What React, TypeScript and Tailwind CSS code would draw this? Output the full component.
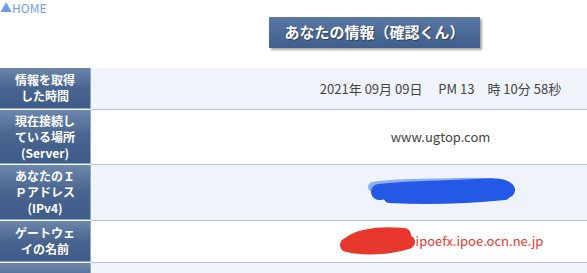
import React from 'react';

type Row = {
  label: string[];
  height: string;
  shaded: boolean;
  value: React.ReactNode;
};

const BlueScribble: React.FC = () => (
  <svg width="152" height="32" viewBox="0 0 152 32" className="inline-block align-middle">
    <path d="M8 10 C 30 6, 60 7, 90 6 S 135 7, 142 9" stroke="#6f9af0" strokeWidth="10" strokeLinecap="round" fill="none" opacity="0.75" />
    <path d="M14 15 C 45 11, 80 12, 110 10 S 138 11, 142 13" stroke="#2459e8" strokeWidth="16" strokeLinecap="round" fill="none" />
    <path d="M24 21 C 60 23, 100 22, 140 18" stroke="#2459e8" strokeWidth="10" strokeLinecap="round" fill="none" />
  </svg>
);

const RedScribble: React.FC = () => (
  <svg width="78" height="30" viewBox="0 0 78 30" className="inline-block align-middle">
    <path d="M12 16 C 24 8, 42 6, 66 8" stroke="#e8382e" strokeWidth="14" strokeLinecap="round" fill="none" />
    <path d="M9 18 C 26 22, 50 21, 70 15" stroke="#e8382e" strokeWidth="14" strokeLinecap="round" fill="none" />
  </svg>
);

const rows: Row[] = [
  {
    label: ['情報を取得', 'した時間'],
    height: 'h-[41px]',
    shaded: true,
    value: <span>2021年 09月 09日　 PM 13　時 10分 58秒</span>,
  },
  {
    label: ['現在接続し', 'ている場所', '(Server)'],
    height: 'h-[54px]',
    shaded: false,
    value: <span>www.ugtop.com</span>,
  },
  {
    label: ['あなたのＩ', 'Ｐアドレス', '(IPv4)'],
    height: 'h-[55px]',
    shaded: true,
    value: <BlueScribble />,
  },
  {
    label: ['ゲートウェ', 'イの名前'],
    height: 'h-[41px]',
    shaded: false,
    value: (
      <span className="text-[#e8392c]">
        <RedScribble />
        ipoefx.ipoe.ocn.ne.jp
      </span>
    ),
  },
  {
    label: [],
    height: 'h-[41px]',
    shaded: true,
    value: null,
  },
];

const App: React.FC = () => {
  return (
    <div className="h-screen w-full overflow-hidden bg-white" style={{ fontFamily: '"Noto Sans CJK JP", "Noto Sans", sans-serif' }}>
      <div className="w-[790px]">
        <a href="#" className="block text-[12px] leading-[16px] text-[#6d9ce8]">▲HOME</a>

        <div className="ml-[269px] mt-[1px] flex h-[31px] w-[211px] items-center justify-center bg-gradient-to-b from-[#5877a3] to-[#415f8c] text-[15px] font-bold text-white shadow-[2px_2px_2px_rgba(0,0,0,0.35)] [text-shadow:1px_1px_1px_rgba(0,0,0,0.4)]">
          あなたの情報（確認くん）
        </div>

        <div className="mt-[20px]">
          {rows.map((row, i) => (
            <div key={i} className="flex">
              <div
                className={`${row.height} flex w-[91px] shrink-0 flex-col items-center justify-center border-b border-r border-b-[#8ea4c4] border-r-[#8fa7c9] bg-gradient-to-b from-[#6d86ac] via-[#48658f] to-[#3f5c8a] text-center text-[12px] font-bold leading-[16px] text-white`}
              >
                {row.label.map((line, j) => (
                  <span key={j}>{line}</span>
                ))}
              </div>
              <div
                className={`${row.height} box-content flex flex-1 items-center justify-center border-b border-[#b0c9e8] text-[13px] text-[#444] ${row.shaded ? 'bg-[#f0f4fa]' : 'bg-white'}`}
              >
                {row.value}
              </div>
            </div>
          ))}
        </div>
      </div>
    </div>
  );
};

export default App;
